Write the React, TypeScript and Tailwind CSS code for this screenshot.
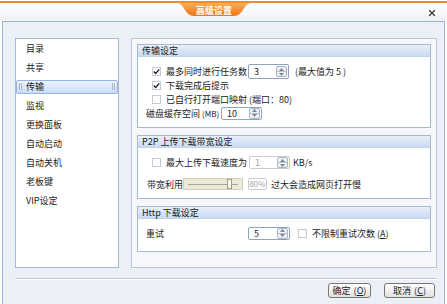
import { X } from "lucide-react";

const menu = ["目录", "共享", "传输", "监视", "更换面板", "自动启动", "自动关机", "老板键", "VIP设定"];

function Check({ on = false }: { on?: boolean }) {
  return (
    <span className="flex h-[9px] w-[9px] shrink-0 items-center justify-center border border-[#c3cad6] bg-white">
      {on && (
        <svg width="10" height="9" viewBox="0 0 10 9" className="-mt-[1px]">
          <path d="M1 4.5 L3.8 7.3 L9 1.5" fill="none" stroke="#1a1a1a" strokeWidth="1.8" />
        </svg>
      )}
    </span>
  );
}

function Spin({ value, w, h, off = false }: { value: string; w: string; h: string; off?: boolean }) {
  return (
    <div
      className={`flex shrink-0 items-center justify-between rounded-[2px] border bg-white pl-[5px] pr-[1px] ${w} ${h} ${
        off ? "border-[#c9ced8] text-[#a0a0a0]" : "border-[#8fa3bf] text-[#222]"
      }`}
    >
      <span>{value}</span>
      <div className="flex h-[11px] w-[11px] flex-col overflow-hidden rounded-[2px] border border-[#a9b4c4] bg-[#eef1f5]">
        <div className="flex flex-1 items-center justify-center border-b border-[#b8c1ce]">
          <svg width="5" height="3" viewBox="0 0 5 3">
            <path d="M0 3 L2.5 0 L5 3Z" fill="#7c8796" />
          </svg>
        </div>
        <div className="flex flex-1 items-center justify-center">
          <svg width="5" height="3" viewBox="0 0 5 3">
            <path d="M0 0 L2.5 3 L5 0Z" fill="#7c8796" />
          </svg>
        </div>
      </div>
    </div>
  );
}

function Group({ title, h, children }: { title: string; h: string; children: React.ReactNode }) {
  return (
    <div className={`flex flex-col border border-[#a8b8d2] bg-white ${h}`}>
      <div className="h-[12px] shrink-0 border-b border-[#c3d3ea] bg-gradient-to-b from-[#e9f0fa] to-[#c8daf1] pl-[4px] text-[9px] leading-[12px] text-[#222]">
        {title}
      </div>
      {children}
    </div>
  );
}

function Btn({ label, k, w }: { label: string; k: string; w: string }) {
  return (
    <button
      className={`flex h-[15px] items-center justify-center rounded-[3px] border border-[#777] bg-gradient-to-b from-white to-[#e2e2e2] text-[9px] text-[#222] ${w}`}
    >
      {label}
      <span className="ml-[3px]">
        (<span className="underline">{k}</span>)
      </span>
    </button>
  );
}

export default function App() {
  return (
    <div className="flex h-[304px] w-[447px] flex-col overflow-hidden whitespace-nowrap bg-white font-['Noto_Sans_CJK_SC',sans-serif] text-[9px] leading-none text-[#222]">
      {/* title bar */}
      <div className="mt-[1px] flex h-[20px] shrink-0 items-start border-t-2 border-[#f08a2c] bg-gradient-to-b from-white to-[#eef1f5] pl-[177px] pr-[10px]">
        <div className="relative flex h-[14px] w-[74px] items-center justify-center">
          <svg className="absolute inset-0" width="74" height="14" viewBox="0 0 74 14">
            <defs>
              <linearGradient id="tab" x1="0" y1="0" x2="0" y2="1">
                <stop offset="0" stopColor="#fdae55" />
                <stop offset="1" stopColor="#ee7414" />
              </linearGradient>
            </defs>
            <path d="M0 0 H74 C67 0 66 13 57 13 H17 C8 13 7 0 0 0 Z" fill="url(#tab)" />
          </svg>
          <span className="relative font-bold text-white">高级设置</span>
        </div>
        <X className="ml-auto mt-[5px] text-[#3a3a3a]" size={10} strokeWidth={3} />
      </div>

      {/* body */}
      <div className="mx-[2px] flex flex-1 flex-col border-x border-t border-[#9fb2d2] bg-[#ebeff6] pl-[12px] pr-[7px] pt-[16px]">
        <div className="flex h-[230px] gap-[12px]">
          <div className="flex w-[104px] flex-col border border-[#a9b8d3] bg-white">
            {menu.map((m) =>
              m === "传输" ? (
                <div key={m} className="flex h-[19px] items-center">
                  <div className="flex h-[14px] w-full items-center rounded-[2px] border border-[#93b5e0] bg-gradient-to-b from-[#eef5fd] to-[#c8ddf5]">
                    <span className="ml-[2px] h-[7px] w-[3px] border-x border-[#a8b4c4]" />
                    <span className="ml-[4px]">{m}</span>
                    <span className="ml-auto mr-[2px] h-[7px] w-[3px] border-x border-[#a8b4c4]" />
                  </div>
                </div>
              ) : (
                <div key={m} className="flex h-[19px] items-center pl-[10px]">
                  {m}
                </div>
              )
            )}
          </div>

          <div className="flex w-[306px] flex-col gap-[7px] border border-[#b9c6db] bg-[#f5f7fb] px-[5px] pt-[5px]">
            <Group title="传输设定" h="h-[84px]">
              <div className="flex flex-col pl-[14px] pt-[7px]">
                <div className="flex h-[15px] items-center">
                  <Check on />
                  <span className="ml-[5px] w-[82px]">最多同时进行任务数</span>
                  <Spin value="3" w="w-[41px]" h="h-[15px]" />
                  <span className="ml-[6px]">(最大值为 5 )</span>
                </div>
                <div className="flex h-[13px] items-center">
                  <Check on />
                  <span className="ml-[5px]">下载完成后提示</span>
                </div>
                <div className="flex h-[14px] items-center">
                  <Check />
                  <span className="ml-[5px]">已自行打开端口映射 (端口：80)</span>
                </div>
                <div className="-ml-[6px] flex h-[14px] items-center">
                  <span className="w-[75px]">
                    磁盘缓存空间 <span className="text-[8px]">(MB)</span>
                  </span>
                  <Spin value="10" w="w-[41px]" h="h-[13px]" />
                </div>
              </div>
            </Group>

            <Group title="P2P 上传下载带宽设定" h="h-[64px]">
              <div className="flex flex-col pl-[14px] pt-[8px]">
                <div className="flex h-[13px] items-center">
                  <Check />
                  <span className="ml-[5px] w-[83px]">最大上传下载速度为</span>
                  <Spin value="1" w="w-[41px]" h="h-[13px]" off />
                  <span className="ml-[3px]">KB/s</span>
                </div>
                <div className="-ml-[5px] mt-[9px] flex h-[12px] items-center">
                  <span className="w-[36px]">带宽利用</span>
                  <div className="relative flex h-[12px] w-[60px] items-center border border-[#d3cfbd] bg-[#ece9d6] px-[4px]">
                    <div className="h-[1px] w-full bg-[#a7a596]" />
                    <div className="absolute left-[43px] top-[0px] h-[10px] w-[5px] border border-[#9e9c8e] bg-[#f7f6ef]" />
                  </div>
                  <div className="ml-[5px] flex h-[12px] w-[19px] items-center justify-center rounded-[2px] border border-[#c6ccd6] bg-white text-[8px] text-[#a5a5a5]">
                    80%
                  </div>
                  <span className="ml-[4px]">过大会造成网页打开慢</span>
                </div>
              </div>
            </Group>

            <Group title="Http 下载设定" h="h-[46px]">
              <div className="mt-[8px] flex h-[12px] items-center pl-[8px]">
                <span className="w-[102px]">重试</span>
                <Spin value="5" w="w-[42px]" h="h-[13px]" />
                <span className="ml-[8px]">
                  <Check />
                </span>
                <span className="ml-[5px]">
                  不限制重试次数 (<span className="underline">A</span>)
                </span>
              </div>
            </Group>
          </div>
        </div>

        <div className="mt-[10px] border-t border-[#c4cbd7] shadow-[0_1px_0_#ffffff]" />

        <div className="mt-[4px] flex justify-end gap-[13px] pr-[2px]">
          <Btn label="确定" k="O" w="w-[43px]" />
          <Btn label="取消" k="C" w="w-[51px]" />
        </div>
      </div>
    </div>
  );
}
